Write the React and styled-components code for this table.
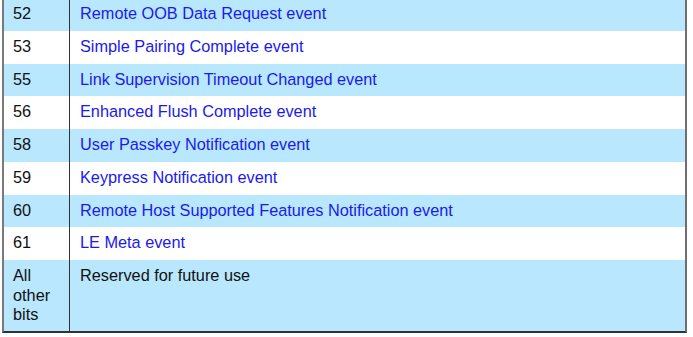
import React from 'react'
import styled, { createGlobalStyle } from 'styled-components'

const rows = [
  { bit: '52', name: 'Remote OOB Data Request event' },
  { bit: '53', name: 'Simple Pairing Complete event' },
  { bit: '55', name: 'Link Supervision Timeout Changed event' },
  { bit: '56', name: 'Enhanced Flush Complete event' },
  { bit: '58', name: 'User Passkey Notification event' },
  { bit: '59', name: 'Keypress Notification event' },
  { bit: '60', name: 'Remote Host Supported Features Notification event' },
  { bit: '61', name: 'LE Meta event' },
]

const Global = createGlobalStyle`
  html, body {
    margin: 0;
    padding: 0;
    background: #fff;
    overflow: hidden;
  }
`

const Page = styled.div`
  width: 693px;
  height: 337px;
  overflow: hidden;
  background: #fff;
`

const Table = styled.div`
  margin: -2px 0 0 2px;
  width: 681px;
  display: grid;
  grid-template-columns: 66px 1fr;
  border-left: 2px solid #7a7a7a;
  border-right: 2px solid #6e6e6e;
  border-bottom: 2px solid #333;
  font-family: 'Liberation Sans', Arial, sans-serif;
  font-size: 16.3px;
  line-height: 19.5px;
`

const Cell = styled.div`
  background: ${p => (p.$shaded ? '#b9e7fe' : '#fff')};
  color: ${p => (p.$link ? '#1a1aee' : '#111')};
  height: ${p => (p.$tall ? 'auto' : '32.75px')};
  box-sizing: border-box;
  padding: 6px 0 6px ${p => (p.$first ? '9px' : '10px')};
  border-right: ${p => (p.$first ? '1px solid #333' : 'none')};
  white-space: nowrap;
`

function App() {
  return (
    <Page>
      <Global />
      <Table>
        {rows.map((r, i) => (
          <React.Fragment key={r.bit}>
            <Cell $first $shaded={i % 2 === 0}>{r.bit}</Cell>
            <Cell $link $shaded={i % 2 === 0}>{r.name}</Cell>
          </React.Fragment>
        ))}
        <Cell $first $shaded $tall>All<br />other<br />bits</Cell>
        <Cell $shaded $tall>Reserved for future use</Cell>
      </Table>
    </Page>
  )
}

export default App
